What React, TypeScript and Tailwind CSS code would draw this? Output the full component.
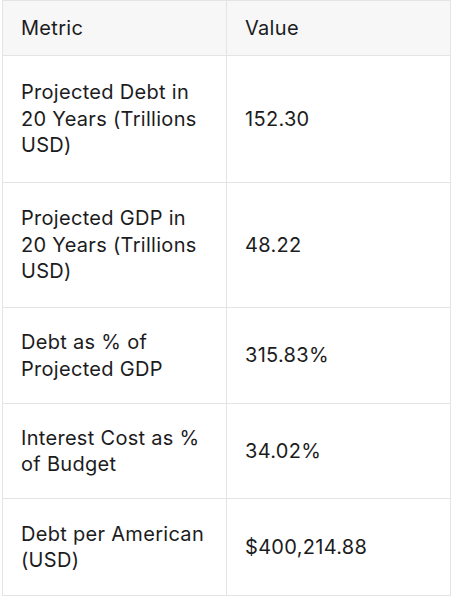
import React from "react";

const rows: { metric: string[]; value: string; h: string }[] = [
  { metric: ["Projected Debt in", "20 Years (Trillions", "USD)"], value: "152.30", h: "h-[127px]" },
  { metric: ["Projected GDP in", "20 Years (Trillions", "USD)"], value: "48.22", h: "h-[125px]" },
  { metric: ["Debt as % of", "Projected GDP"], value: "315.83%", h: "h-[96px]" },
  { metric: ["Interest Cost as %", "of Budget"], value: "34.02%", h: "h-[95px]" },
  { metric: ["Debt per American", "(USD)"], value: "$400,214.88", h: "h-[97px]" },
];

export default function App() {
  return (
    <div
      className="w-[452px] h-[597px] bg-white px-[2px] text-[#1c1c1e]"
      style={{ fontFamily: 'Inter, "Noto Sans", "Liberation Sans", sans-serif' }}
    >
      <table className="w-[448px] table-fixed border-collapse text-[20px] leading-[26.5px] tracking-[0.3px]">
        <colgroup>
          <col className="w-[224px]" />
          <col className="w-[224px]" />
        </colgroup>
        <thead>
          <tr className="h-[55px] bg-[#f7f7f7]">
            <th className="border border-[#e4e4e4] px-[18px] text-left font-normal align-middle">Metric</th>
            <th className="border border-[#e4e4e4] px-[18px] text-left font-normal align-middle">Value</th>
          </tr>
        </thead>
        <tbody>
          {rows.map((r) => (
            <tr key={r.value} className={r.h}>
              <td className="border border-[#e4e4e4] px-[18px] align-middle whitespace-nowrap">
                {r.metric.map((line, i) => (
                  <React.Fragment key={i}>
                    {i > 0 && <br />}
                    {line}
                  </React.Fragment>
                ))}
              </td>
              <td className="border border-[#e4e4e4] px-[18px] align-middle">{r.value}</td>
            </tr>
          ))}
        </tbody>
      </table>
    </div>
  );
}
